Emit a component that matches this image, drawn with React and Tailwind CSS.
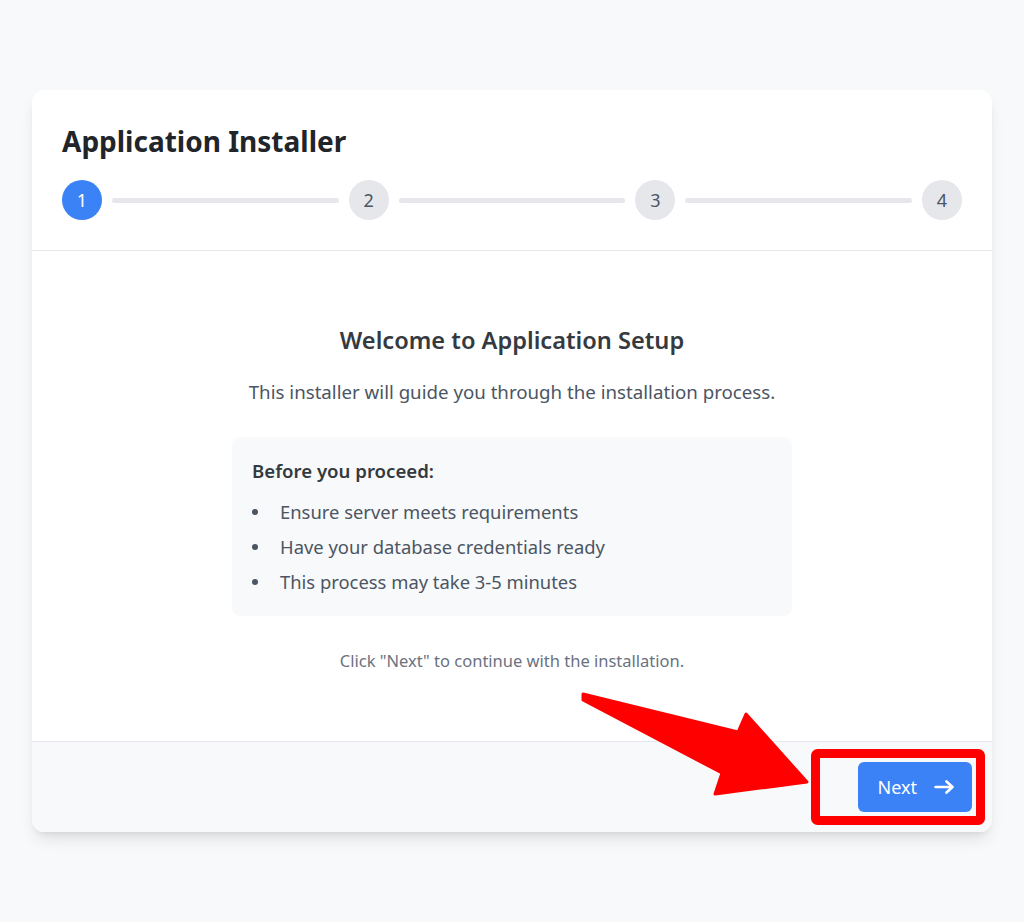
import React from "react";

const font = { fontFamily: '"Noto Sans", "Open Sans", sans-serif' };

function Step({ n, active }) {
  return (
    <div
      className={
        "w-10 h-10 rounded-full flex items-center justify-center text-[18px] shrink-0 " +
        (active ? "bg-[#3b82f6] text-white" : "bg-[#e5e7eb] text-[#4b5563]")
      }
    >
      {n}
    </div>
  );
}

function Line() {
  return <div className="flex-1 h-[5px] bg-[#e5e7eb] mx-[10px] rounded-full" />;
}

export default function App() {
  const items = [
    "Ensure server meets requirements",
    "Have your database credentials ready",
    "This process may take 3-5 minutes",
  ];
  return (
    <div
      className="relative min-h-screen bg-[#f8f9fa] flex items-center justify-center px-8"
      style={font}
    >
      <div className="w-full bg-white rounded-xl shadow-lg overflow-hidden">
        <div className="px-[30px] pt-[33px] pb-[30px] border-b border-[#e5e7eb]">
          <h1 className="text-[28px] leading-[36px] font-bold text-[#212529] mb-[21px]">
            Application Installer
          </h1>
          <div className="flex items-center">
            <Step n={1} active />
            <Line />
            <Step n={2} />
            <Line />
            <Step n={3} />
            <Line />
            <Step n={4} />
          </div>
        </div>

        <div className="pt-[73px] pb-[68px] px-[30px] text-center">
          <h2 className="text-[23.6px] leading-[32px] font-semibold text-[#343a40]">
            Welcome to Application Setup
          </h2>
          <p className="mt-[22px] text-[18.7px] leading-[28px] text-[#4b5563]">
            This installer will guide you through the installation process.
          </p>
          <div className="mt-[31px] mx-auto max-w-[560px] bg-[#f8f9fa] rounded-lg p-5 text-left">
            <div className="text-[18.6px] leading-[28px] font-semibold text-[#343a40]">
              Before you proceed:
            </div>
            <ul className="mt-[13px] flex flex-col gap-[7px]">
              {items.map((t) => (
                <li key={t} className="flex items-center text-[18.4px] leading-[28px] text-[#4b5563]">
                  <span className="w-[6px] h-[6px] rounded-full bg-[#4b5563] mr-[22px] shrink-0" />
                  {t}
                </li>
              ))}
            </ul>
          </div>
          <p className="mt-[33px] text-[16.5px] leading-[24px] text-[#6b7280]">
            Click "Next" to continue with the installation.
          </p>
        </div>

        <div className="bg-[#f8f9fa] border-t border-[#e5e7eb] p-5 flex justify-end">
          <button className="h-[50px] pl-5 pr-[18px] rounded-md bg-[#3b82f6] text-white text-[18px] flex items-center gap-[17px]">
            Next
            <svg width="20" height="14" viewBox="0 0 20 14" fill="none" stroke="white" strokeWidth="2.6" strokeLinecap="round" strokeLinejoin="round">
              <path d="M1.5 7h17M12.5 1.5L18.5 7l-6 5.5" />
            </svg>
          </button>
        </div>
      </div>

      <svg
        className="absolute inset-0 pointer-events-none"
        width="1024"
        height="922"
        viewBox="0 0 1024 922"
      >
        <polygon
          points="583,694 738,732 746,714 807,782 715,794 722,773 583,700"
          fill="#ff0000"
          stroke="#ff0000"
          strokeWidth="3"
          strokeLinejoin="round"
        />
        <rect x="815.5" y="753.5" width="165" height="67" rx="2" fill="none" stroke="#ff0000" strokeWidth="9" />
      </svg>
    </div>
  );
}
